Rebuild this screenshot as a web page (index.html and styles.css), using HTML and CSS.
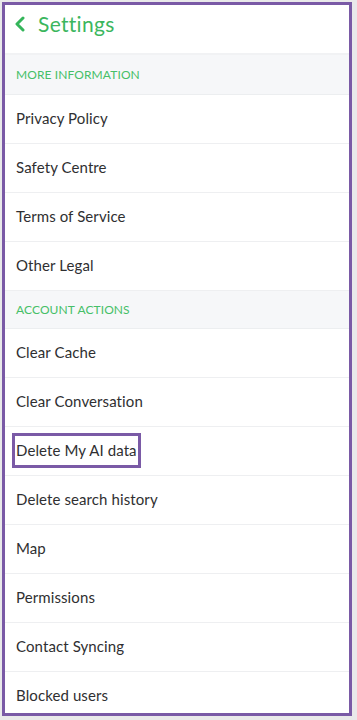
FILE: index.html
```
<!DOCTYPE html>
<html>
<head>
<meta charset="utf-8">
<link rel="stylesheet" href="styles.css">
</head>
<body>
<div class="frame">
  <div class="header">
    <svg class="back" width="12" height="16" viewBox="0 0 12 16"><path d="M9 2 L3 8 L9 14" fill="none" stroke="#34b55a" stroke-width="3" stroke-linecap="round" stroke-linejoin="round"/></svg>
    <span class="title">Settings</span>
  </div>
  <div class="section">MORE INFORMATION</div>
  <div class="row">Privacy Policy</div>
  <div class="row">Safety Centre</div>
  <div class="row">Terms of Service</div>
  <div class="row">Other Legal</div>
  <div class="section short">ACCOUNT ACTIONS</div>
  <div class="row">Clear Cache</div>
  <div class="row">Clear Conversation</div>
  <div class="row"><span class="mark">Delete My AI data</span></div>
  <div class="row">Delete search history</div>
  <div class="row">Map</div>
  <div class="row">Permissions</div>
  <div class="row">Contact Syncing</div>
  <div class="row">Blocked users</div>
</div>
</body>
</html>
```
FILE: styles.css
```
html, body { margin: 0; padding: 0; background: #e9e9ea; }
body { font-family: Lato, "Open Sans", sans-serif; width: 357px; height: 720px; overflow: hidden; }
.frame {
  margin: 2px 0 0 2px;
  width: 344px;
  height: 708px;
  border: 3px solid #7a5aa6;
  background: #fff;
  overflow: hidden;
  display: flex;
  flex-direction: column;
}
.header {
  height: 48px;
  flex: none;
  display: flex;
  align-items: center;
  padding-left: 9px;
  gap: 12px;
  border-bottom: 2px solid #f1f2f4;
  padding-bottom: 0;
}
.back { margin-top: -10px; }
.title { font-size: 21px; color: #3bb65e; letter-spacing: 0.3px; margin-top: -12px; }
.section {
  flex: none;
  height: 39px;
  display: flex;
  align-items: center;
  padding-left: 11px;
  background: #f6f7f9;
  color: #46bf68;
  font-size: 12px;
  letter-spacing: 0.1px;
  border-bottom: 1px solid #eceef0;
}
.section.short { height: 37px; padding-bottom: 0; }
.row {
  flex: none;
  height: 45px;
  padding-bottom: 3px;
  display: flex;
  align-items: center;
  padding-left: 11px;
  font-size: 15px;
  color: #2f2f31;
  border-bottom: 1px solid #eeeff1;
  letter-spacing: 0.1px;
}
.mark {
  border: 3px solid #7a5aa6;
  padding: 5px 1px 6px 1px;
  margin-left: -4px;
  margin-top: 2px;
}
```
